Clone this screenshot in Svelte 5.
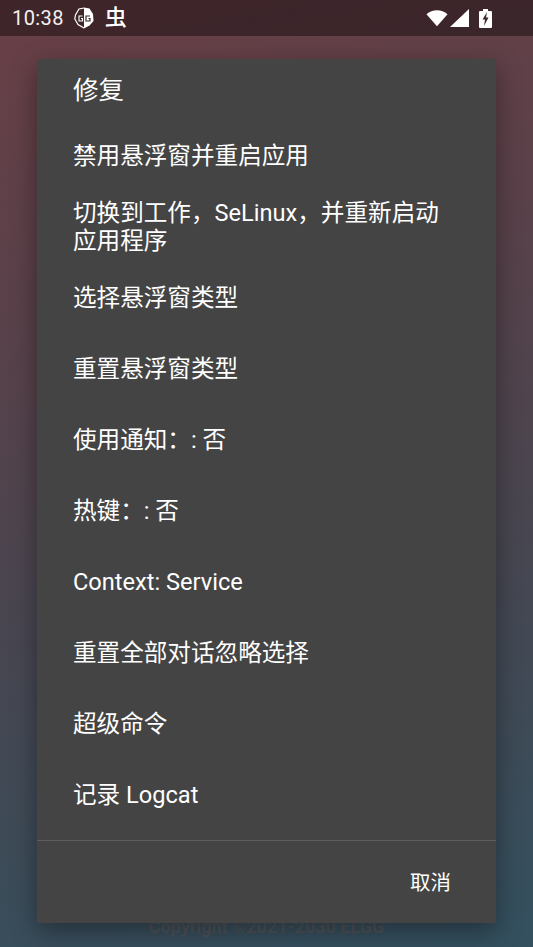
<script>
	const items = [
		'禁用悬浮窗并重启应用',
		'切换到工作，SeLinux，并重新启动应用程序',
		'选择悬浮窗类型',
		'重置悬浮窗类型',
		'使用通知：: 否',
		'热键：: 否',
		'Context: Service',
		'重置全部对话忽略选择',
		'超级命令',
		'记录 Logcat'
	];
</script>

<div class="screen">
	<div class="status-bar">
		<div class="status-left">
			<span class="clock">10:38</span>
			<svg class="gg-icon" viewBox="0 0 20 22" width="20" height="22">
				<path d="M10 0.5 L15.5 1.5 L19 7 L19.5 14 L15.5 18.5 L10 21.5 Z" fill="#fff" />
				<path d="M10 1 L5 2 L1.5 8 L0.8 12 L4 17.5 L10 21" fill="none" stroke="#fff" stroke-width="1.2" />
				<path d="M8.5 9 h-3.5 v5 h3.5 v-2.5 h-1.5" fill="none" stroke="#fff" stroke-width="1.1" />
				<path d="M16 9 h-4 v5 h4 v-2.5 h-1.5" fill="none" stroke="#3c272b" stroke-width="1.2" />
			</svg>
			<span class="bug">虫</span>
		</div>
		<div class="status-right">
			<svg class="wifi" viewBox="0 0 24 18" width="22" height="18">
				<path d="M12 18 L0.5 5 C7 -1 17 -1 23.5 5 Z" fill="#fff" />
			</svg>
			<svg viewBox="0 0 19 18" width="19" height="18">
				<path d="M19 0 V18 H0 Z" fill="#fff" />
			</svg>
			<svg class="battery" viewBox="0 0 13 19" width="13" height="19">
				<path d="M4 0 h5 v2 h3 a1 1 0 0 1 1 1 v15 a1 1 0 0 1 -1 1 h-11 a1 1 0 0 1 -1 -1 v-15 a1 1 0 0 1 1 -1 h3 Z" fill="#fff" />
				<path d="M8 3 L3.5 10.5 H6 L5 17 L9.5 8.5 H7 Z" fill="#3c272b" />
			</svg>
		</div>
	</div>
	<div class="backdrop">
		<div class="copyright">Copyright ©2021-2030 ELGG</div>
	</div>
	<div class="dialog">
		<h2 class="title">修复</h2>
		<ul class="list">
			{#each items as item}
				<li class="row">{item}</li>
			{/each}
		</ul>
		<div class="actions">
			<button class="cancel">取消</button>
		</div>
	</div>
</div>

<style>
	:global(body) {
		margin: 0;
		background: #3c3a40;
	}
	.screen {
		position: relative;
		width: 533px;
		height: 947px;
		display: flex;
		flex-direction: column;
		overflow: hidden;
		font-family: Roboto, "Noto Sans CJK SC", sans-serif;
		color: #fff;
		background: linear-gradient(168deg, #693f46 0%, #58414a 32%, #484650 60%, #33505f 100%);
	}
	.status-bar {
		height: 36px;
		flex: none;
		display: flex;
		align-items: center;
		justify-content: space-between;
		padding: 0 41px 0 12px;
		background: rgba(0, 0, 0, 0.4);
	}
	.status-left {
		display: flex;
		align-items: center;
	}
	.clock {
		font-size: 20px;
		letter-spacing: 0.4px;
		color: #f4f1f1;
	}
	.gg-icon {
		margin-left: 10px;
	}
	.bug {
		margin-left: 11px;
		font-size: 22px;
		line-height: 24px;
		font-weight: 500;
	}
	.status-right {
		display: flex;
		align-items: center;
		gap: 2px;
	}
	.battery {
		margin-left: 8px;
	}
	.backdrop {
		flex: 1;
		display: flex;
		flex-direction: column;
		justify-content: flex-end;
		align-items: center;
		padding-bottom: 10px;
	}
	.copyright {
		font-size: 18px;
		font-weight: 700;
		line-height: 20px;
		color: #4d5257;
	}
	.dialog {
		position: absolute;
		left: 37px;
		top: 59px;
		width: 459px;
		height: 864px;
		display: flex;
		flex-direction: column;
		background: #444444;
		box-shadow: 0 8px 24px rgba(0, 0, 0, 0.38);
	}
	.title {
		margin: 0;
		padding: 14px 36px 0;
		height: 47px;
		font-size: 25.5px;
		font-weight: 400;
		line-height: 34px;
	}
	.list {
		list-style: none;
		margin: 0;
		padding: 0;
		flex: 1;
	}
	.row {
		min-height: 71px;
		box-sizing: border-box;
		display: flex;
		align-items: center;
		padding: 0 36px;
		font-size: 23.6px;
		line-height: 28px;
	}
	.actions {
		height: 80px;
		padding: 2px 45px 0 0;
		flex: none;
		border-top: 1px solid #5e5e5e;
		display: flex;
		justify-content: flex-end;
		align-items: center;
	}
	.cancel {
		background: none;
		border: none;
		padding: 0;
		color: #fff;
		font-family: inherit;
		font-size: 20.5px;
		line-height: 24px;
	}
</style>
